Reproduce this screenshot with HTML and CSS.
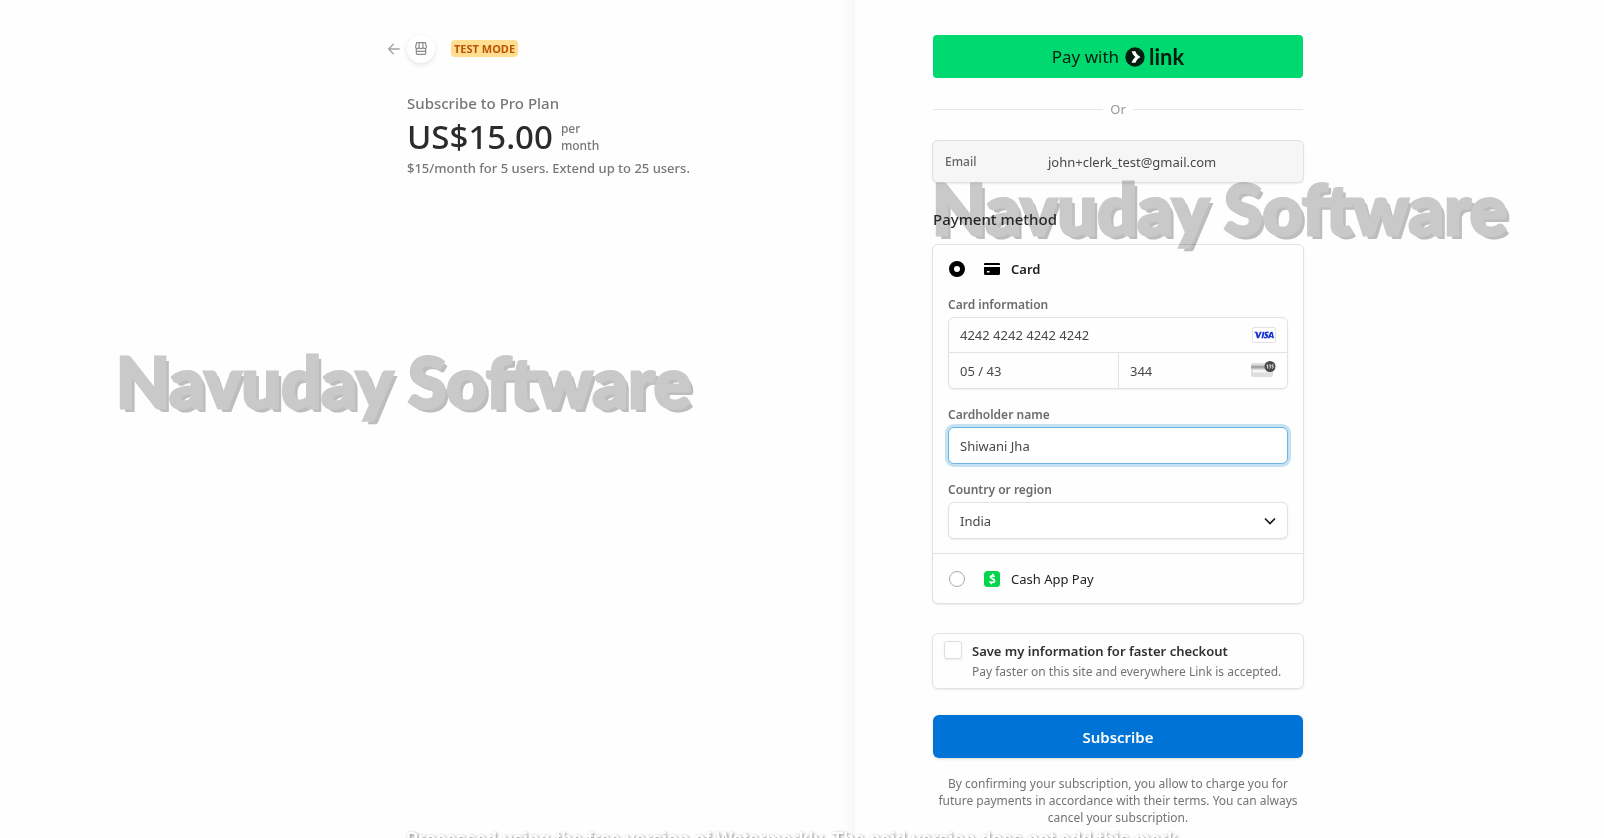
FILE: index.html
```
<!DOCTYPE html>
<html lang="en">
<head>
<meta charset="utf-8">
<title>Subscribe to Pro Plan</title>
<link rel="stylesheet" href="styles.css">
</head>
<body>
<div class="page">
  <section class="summary">
    <div class="summary-content">
      <header class="merchant">
        <a class="back" href="#" aria-label="Back">
          <svg width="12" height="12" viewBox="0 0 12 12" fill="none" stroke="#a3a3a3" stroke-width="1.3" stroke-linecap="round" stroke-linejoin="round"><path d="M11.3 6H.8M5.3 1.2.7 6l4.6 4.8"/></svg>
        </a>
        <span class="store">
          <svg width="12" height="13" viewBox="0 0 12 13" fill="none" stroke="#8c8c8c" stroke-width="1.2" stroke-linejoin="round"><path d="M1.600.6h8.800l1 4.200c0 1.200-.7 1.900-1.600 1.900S8 6 8 5c0 1-.9 1.700-2 1.700S4 6 4 5c0 1-.8 1.700-1.800 1.700S.6 6 .6 4.800zM4.200.8 4 5M7.800.8 8 5M1.300 6.700v4.600c0 .6.400 1 1 1h7.400c.6 0 1-.4 1-1V6.700M1.500 9.400h9"/></svg>
        </span>
        <span class="badge">TEST MODE</span>
      </header>
      <h1 class="product">Subscribe to Pro Plan</h1>
      <div class="price">
        <span class="amount">US$15.00</span>
        <span class="period">per<br>month</span>
      </div>
      <p class="description">$15/month for 5 users. Extend up to 25 users.</p>
    </div>
  </section>

  <main class="checkout">
    <form class="form">
      <button class="link-button" type="button">
        <span>Pay with</span>
        <span class="link-logo">
          <svg width="20" height="20" viewBox="0 0 20 20"><circle cx="10" cy="10" r="9.700" fill="#011e0f"/><path d="M6.600 4.200h3.900c.7 2.300 2.300 4.300 5 5.800-2.700 1.500-4.300 3.500-5 5.800H6.600c.8-2.400 2.100-4.300 3.800-5.800-1.700-1.500-3-3.400-3.800-5.800z" fill="#fff"/></svg>
          <span class="link-word">link</span>
        </span>
      </button>

      <div class="divider"><span>Or</span></div>

      <div class="email">
        <span class="email-label">Email</span>
        <span class="email-value">john+clerk_test@gmail.com</span>
      </div>

      <h2 class="heading">Payment method</h2>

      <div class="methods">
        <div class="card-method">
          <label class="method">
            <input class="radio" type="radio" name="method" checked>
            <svg class="method-icon" width="16" height="16" viewBox="0 0 16 16"><path d="M0 3.200C0 2.500.5 2 1.200 2h13.600c.7 0 1.200.5 1.200 1.200V4H0zM0 6h16v6.800c0 .7-.5 1.200-1.200 1.200H1.200C.5 14 0 13.500 0 12.800zm3 4v1.500h2.500V10z" fill="#000" fill-rule="evenodd"/></svg>
            <span class="method-name strong">Card</span>
          </label>

          <label class="label" for="number">Card information</label>
          <div class="card-fields">
            <div class="cell wide">
              <input id="number" class="bare" type="text" value="4242 4242 4242 4242">
              <svg width="24" height="16" viewBox="0 0 24 16"><rect x=".5" y=".5" width="23" height="15" rx="1.500" fill="#fff" stroke="#e3e3e3"/><g fill="#1a34d2"><path d="M2.200 4.700h2.500c.5 0 .8.200.9.700l.7 3.300 1.500-4h2l-2.900 6.600h-2L3.700 6.200c-.1-.4-.7-.7-1.500-.9z"/><path d="M10.600 4.700h1.900l-1.200 6.600H9.400z"/><path d="m16.700 4.900-.3 1.500c-1-.5-2.100-.4-2.100.1s2 .8 2 2.500c0 2.300-2.600 2.800-4.400 2.100l.3-1.600c1.100.6 2.300.5 2.300-.1 0-.7-2-.8-2-2.500 0-2.100 2.400-2.800 4.200-2z"/><path d="M18.900 4.700h1.700l1.400 6.600h-1.700l-.2-1h-2.200l-.4 1h-1.900l2.600-6c.2-.4.400-.6.700-.6zm.7 1.900-1 2.300h1.400z"/></g></svg>
            </div>
            <div class="cell">
              <input class="bare" type="text" value="05 / 43" aria-label="Expiry date">
            </div>
            <div class="cell split">
              <input class="bare" type="text" value="344" aria-label="Security code">
              <svg width="25" height="22" viewBox="0 0 25 22"><rect x="0" y="3" width="22" height="14" rx="2" fill="#dedede"/><path d="M0 5.500h22v3H0z" fill="#a6a6a6"/><path d="M2 10h15v2.500H2z" fill="#f7f7f7"/><circle cx="19" cy="6.500" r="5.500" fill="#4a4a4a"/><path d="m15.600 5.500 1-.7v3.700M18.200 5h1.400l-.8 1.300c1.500 0 1 2.100-.6 1.900M22.600 4.900H21v1.400c1.800-.4 2 1.900-.1 2" stroke="#fff" stroke-width=".8" fill="none"/></svg>
            </div>
          </div>

          <label class="label" for="name">Cardholder name</label>
          <input id="name" class="field focused" type="text" value="Shiwani Jha">

          <label class="label" for="country">Country or region</label>
          <div class="select-wrap">
            <select id="country" class="field"><option>India</option></select>
            <svg class="chevron" width="12" height="12" viewBox="0 0 12 12" fill="none" stroke="#1a1a1a" stroke-width="1.700"><path d="m1 3.500 5 5 5-5"/></svg>
          </div>
        </div>

        <label class="method cash">
          <input class="radio" type="radio" name="method">
          <svg class="method-icon" width="16" height="16" viewBox="0 0 16 16"><rect width="16" height="16" rx="3.500" fill="#00d54b"/><path d="M10.700 5.600c-1.300-1.100-4.300-1.200-4.300.5 0 1.800 4.200 1.200 4.200 3.600 0 2.100-3.600 2.300-5.300.6M8.900 2.700l-.4 1.800M7.500 11.500l-.4 1.800" fill="none" stroke="#fff" stroke-width="1.700"/></svg>
          <span class="method-name">Cash App Pay</span>
        </label>
      </div>

      <label class="save">
        <input class="check" type="checkbox">
        <span class="save-text">
          <span class="save-title">Save my information for faster checkout</span>
          <span class="save-note">Pay faster on this site and everywhere Link is accepted.</span>
        </span>
      </label>

      <button class="submit" type="button">Subscribe</button>
      <p class="terms">By confirming your subscription, you allow to charge you for future payments in accordance with their terms. You can always cancel your subscription.</p>
    </form>
  </main>

  <div class="mark mark-left">Navuday Software</div>
  <div class="mark mark-right">Navuday Software</div>
  <div class="notice">Processed using the free version of Watermarkly. The paid version does not add this mark.</div>
</div>
</body>
</html>
```
FILE: styles.css
```
* { box-sizing: border-box; }
body {
  margin: 0;
  background: #fefefe;
  color: #303030;
  font: 13px/20px "Noto Sans", "Open Sans", sans-serif;
}
h1, h2, p { margin: 0; }
input, select, button { font: inherit; color: inherit; }

.page {
  position: relative;
  display: grid;
  grid-template-columns: 855fr 749fr;
  height: 100vh;
  overflow: hidden;
}

/* order summary */
.summary {
  display: flex;
  justify-content: flex-end;
  background: linear-gradient(to left, #f8f8f8, #fefefe 14px);
}
.summary-content { width: 448px; padding-top: 34px; }
.merchant {
  display: flex;
  align-items: center;
  height: 29px;
  margin-left: -19px;
}
.back { display: flex; margin-right: 7px; }
.store {
  display: flex;
  align-items: center;
  justify-content: center;
  width: 28px;
  height: 28px;
  margin-right: 16px;
  border-radius: 50%;
  background: #fff;
  box-shadow: 0 2px 5px rgba(0, 0, 0, .1);
}
.badge {
  padding: 0 3px;
  border-radius: 4px;
  background: #ffde92;
  color: #bb5504;
  font-size: 11px;
  font-weight: 700;
  line-height: 17px;
}
.product {
  margin-top: 30px;
  color: #777;
  font-size: 15px;
  font-weight: 500;
  line-height: 20px;
}
.price { display: flex; align-items: center; gap: 8px; height: 48px; }
.amount {
  color: #2b2b2b;
  font-size: 33px;
  font-weight: 500;
  line-height: 48px;
}
.period { color: #777; font-size: 12px; font-weight: 500; line-height: 17px; }
.description { margin-top: -3px; color: #777; font-weight: 500; }

/* payment form */
.checkout { padding: 35px 0 0 78px; }
.form { width: 370px; display: flex; flex-direction: column; }
.link-button {
  display: flex;
  align-items: center;
  justify-content: center;
  gap: 6px;
  height: 43px;
  border: 0;
  border-radius: 4px;
  background: #00d970;
  color: #011e0f;
  font-size: 17px;
}
.link-logo { display: flex; align-items: center; gap: 4px; }
.link-word { font: 700 22px/24px Lato, sans-serif; }
.divider {
  display: flex;
  align-items: center;
  gap: 7px;
  margin: 21px 0;
  color: #999;
}
.divider::before, .divider::after {
  content: "";
  flex: 1;
  height: 1px;
  background: #e6e6e6;
}
.email, .methods, .save {
  margin: 0 -1px;
  border: 1px solid #e2e2e2;
  border-radius: 6px;
  box-shadow: 0 1px 2px rgba(0, 0, 0, .08);
}
.email {
  display: grid;
  grid-template-columns: 103px 1fr;
  align-items: center;
  height: 43px;
  padding: 0 12px;
  background: #f6f6f6;
}
.email-label { color: #666; font-size: 12px; font-weight: 500; }
.email-value { color: #484848; }
.heading {
  margin: 26px 0 15px;
  font-size: 15px;
  font-weight: 500;
  line-height: 20px;
}
.card-method {
  display: flex;
  flex-direction: column;
  padding: 14px 15px;
  border-bottom: 1px solid #e2e2e2;
}
.method { display: flex; align-items: center; color: #222; }
.method-icon { margin: 0 11px 0 19px; }
.strong { font-weight: 600; }
.cash { height: 49px; padding: 0 15px; }
.radio {
  appearance: none;
  width: 16px;
  height: 16px;
  margin: 0 0 0 1px;
  border: 1px solid #aaa;
  border-radius: 50%;
  background: #fff;
}
.radio:checked { border: 5px solid #000; }
.label {
  margin: 16px 0 2px;
  color: #6c6c6c;
  font-size: 12px;
  font-weight: 600;
  line-height: 20px;
}
.card-fields {
  display: grid;
  grid-template-columns: 1fr 1fr;
  grid-template-rows: 35px 35px;
  border: 1px solid #e2e2e2;
  border-radius: 6px;
  box-shadow: 0 1px 2px rgba(0, 0, 0, .06);
}
.cell { display: flex; align-items: center; min-width: 0; padding: 0 11px; }
.wide { grid-column: 1 / -1; border-bottom: 1px solid #e2e2e2; }
.split { border-left: 1px solid #e2e2e2; }
.bare {
  flex: 1;
  min-width: 0;
  padding: 0;
  border: 0;
  outline: 0;
  background: none;
  color: #484848;
}
.field {
  width: 100%;
  height: 37px;
  padding: 0 11px;
  border: 1px solid #e2e2e2;
  border-radius: 6px;
  outline: 0;
  background: #fff;
  color: #484848;
  appearance: none;
  box-shadow: 0 1px 2px rgba(0, 0, 0, .08);
}
.focused { border-color: #6db5e2; box-shadow: 0 0 0 3px #c4e2f3; }
.select-wrap { position: relative; display: flex; }
.chevron { position: absolute; right: 12px; top: 13px; pointer-events: none; }

.save {
  display: flex;
  gap: 10px;
  margin-top: 29px;
  padding: 7px 11px 6px;
}
.check {
  appearance: none;
  width: 18px;
  height: 18px;
  margin: 0;
  border: 1px solid #dedede;
  border-radius: 3px;
  background: #fff;
  box-shadow: 0 1px 2px rgba(0, 0, 0, .08);
}
.save-text { display: flex; flex-direction: column; gap: 1px; }
.save-title { font-weight: 600; }
.save-note { color: #737373; font-size: 12px; }
.submit {
  height: 43px;
  margin-top: 26px;
  border: 0;
  border-radius: 6px;
  background: #0074d6;
  color: #fff;
  font-size: 15px;
  font-weight: 600;
  box-shadow: 0 1px 3px rgba(0, 0, 0, .15);
}
.terms {
  margin-top: 17px;
  color: #737373;
  font-size: 12px;
  line-height: 17px;
  text-align: center;
}

/* overlaid marks */
.mark {
  position: absolute;
  color: #cacaca;
  font: 900 70px/84px Lato, sans-serif;
  -webkit-text-stroke: 3px #cacaca;
  text-shadow: 4px 4px 0 #bebebe;
  mix-blend-mode: multiply;
  pointer-events: none;
  white-space: nowrap;
}
.mark-left { left: 116px; top: 339px; }
.mark-right { left: 932px; top: 166px; }
.notice {
  position: absolute;
  left: 406px;
  top: 828px;
  color: #fff;
  font: 700 18px/22px "Liberation Sans", sans-serif;
  text-shadow: 1px 1px 3px rgba(0, 0, 0, .5);
  white-space: nowrap;
}
```
